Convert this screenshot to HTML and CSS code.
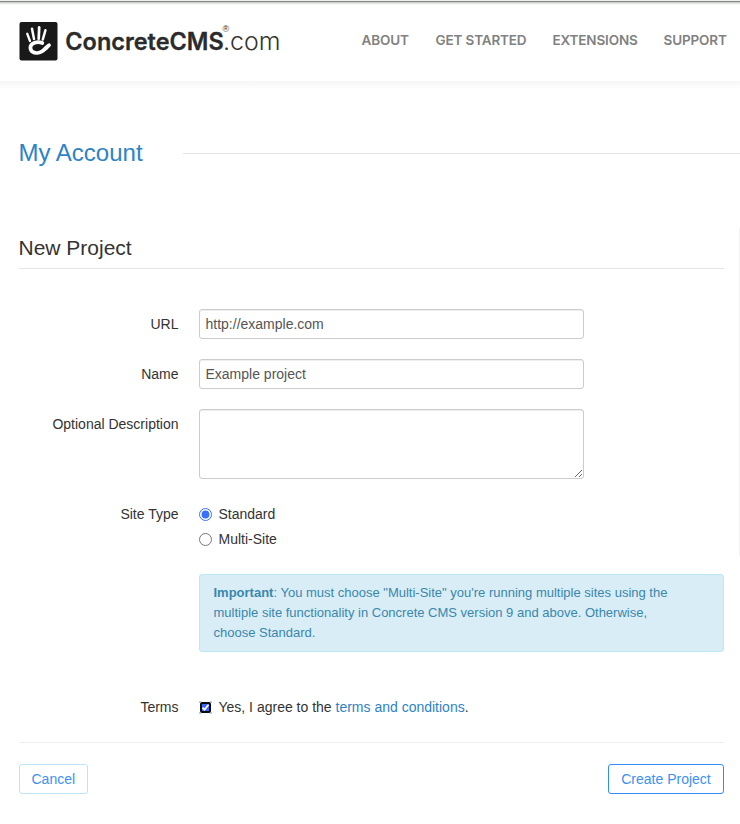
FILE: index.html
```
<!DOCTYPE html>
<html lang="en">
<head>
<meta charset="utf-8">
<title>My Account - New Project</title>
<link rel="stylesheet" href="styles.css">
</head>
<body>
<header class="header">
  <a class="brand" href="#">
    <svg width="265" height="42" viewBox="18 21 265 42" role="img" aria-label="ConcreteCMS.com">
      <rect x="19.5" y="22" width="38" height="38.5" rx="2" fill="#191919"/>
      <g fill="none" stroke="#fff" stroke-linecap="round">
        <path d="M27.2 33.7 L30 41" stroke-width="2.3"/>
        <path d="M32 28.7 L34 39" stroke-width="2.5"/>
        <path d="M39.2 27.4 L38.7 38.8" stroke-width="2.7"/>
        <path d="M45.4 30.3 L42.8 39.5" stroke-width="2.5"/>
        <path d="M42.3 43 C37.5 40.9 30.6 42.7 30.4 47.3 C30.4 51.6 33.6 53.2 37.4 53 C43.6 52.7 45 48 49 45.2" stroke-width="3.7"/>
      </g>
      <path d="M41 50.5 C44 48 46 43.7 50 43.7 C51.3 44.5 49 47.5 47.4 49.5 L42 53 Z" fill="#fff"/>
      <text class="logo-bold" x="65.3" y="50" textLength="158.5" lengthAdjust="spacingAndGlyphs">ConcreteCMS</text>
      <text class="logo-light" x="223" y="50" textLength="57.5" lengthAdjust="spacingAndGlyphs">.com</text>
      <text class="logo-mark" x="222.5" y="32">®</text>
    </svg>
  </a>
  <nav class="nav">
    <a class="about" href="#">ABOUT</a>
    <a class="started" href="#">GET STARTED</a>
    <a class="extensions" href="#">EXTENSIONS</a>
    <a class="support" href="#">SUPPORT</a>
  </nav>
</header>
<div class="page-title"><h1>My Account</h1><span class="rule"></span></div>
<div class="content">
  <main class="main">
    <h2>New Project</h2>
    <form class="form">
      <div class="row"><label for="url">URL</label><input class="control" id="url" type="text" value="http://example.com"></div>
      <div class="row"><label for="name">Name</label><input class="control" id="name" type="text" value="Example project"></div>
      <div class="row"><label for="desc">Optional Description</label><textarea class="control" id="desc"></textarea></div>
      <div class="row">
        <span class="label">Site Type</span>
        <div class="options">
          <label class="option"><input type="radio" name="type" checked>Standard</label>
          <label class="option"><input type="radio" name="type">Multi-Site</label>
          <p class="notice"><b>Important</b>: You must choose "Multi-Site" you're running multiple sites using the<br>multiple site functionality in Concrete CMS version 9 and above. Otherwise,<br>choose Standard.</p>
        </div>
      </div>
      <div class="row terms">
        <span class="label">Terms</span>
        <div class="option">
          <svg class="check" width="13" height="13" viewBox="0 0 13 13" aria-hidden="true">
            <path d="M.5 2V.5H2M11 .5h1.5V2M.5 11v1.5H2M11 12.5h1.5V11" fill="none" stroke="#a8c4ff"/>
            <rect x="2" y="2" width="9" height="9" rx="1" fill="#3b66f7" stroke="#080a12" stroke-width="2"/>
            <path d="M3.5 6.7l2 2 4-5" fill="none" stroke="#fff" stroke-width="1.8"/>
          </svg>
          <span>Yes, I agree to the <a href="#">terms and conditions</a>.</span>
        </div>
      </div>
      <div class="actions"><button class="cancel" type="button">Cancel</button><button class="create" type="button">Create Project</button></div>
    </form>
  </main>
  <aside class="sidebar"></aside>
</div>
</body>
</html>
```
FILE: styles.css
```
* { box-sizing: border-box; }
html { overflow: hidden; }
body { margin: 0; background: #fff; color: #333; font: 14px/20px "Liberation Sans", Arial, sans-serif; }
a { color: #2d83c5; text-decoration: none; }
.header {
  display: flex; justify-content: space-between; height: 81px; padding: 21px 12.5px 0 18px;
  background: linear-gradient(#eee 0 1px, #858885 1px 2px, #cdcfcc 2px 3px, #e5e7e4 3px 4px, #f7f8f7 4px 5px, #fff 5px);
}
.brand, .brand svg { display: block; }
.logo-bold { font: 600 24px Inter, sans-serif; fill: #2b2b2b; stroke: #2b2b2b; stroke-width: .3px; }
.logo-light { font: 300 24px Inter, sans-serif; fill: #333; }
.logo-mark { font: 9px "Liberation Sans", sans-serif; fill: #333; }
.nav { display: flex; gap: 26px; padding-top: 9px; }
.nav a { color: #818181; font: 600 13.5px/20px Inter, sans-serif; letter-spacing: -.15px; white-space: nowrap; }
.nav .about { width: 48px; }
.nav .started { width: 91px; }
.nav .extensions { width: 85px; }
.nav .support { width: 64px; }
.page-title {
  display: flex; align-items: center; gap: 40px; height: 146px; padding: 52px 0 54px 18.5px;
  background: linear-gradient(#f6f6f6, #fff 8px);
}
h1 { margin: 0; color: #2d83c5; font-size: 24px; line-height: 40px; font-weight: 400; }
.rule { flex: 1; height: 1px; margin-top: 1px; background: #e5e5e5; }
.content { display: flex; justify-content: space-between; }
.main { width: 705.5px; margin-left: 18.5px; }
.sidebar { width: 1px; height: 328px; margin-top: 1px; background: #f2f2f2; }
h2 { height: 42px; margin: 0 0 40px; border-bottom: 1px solid #e5e5e5; font-size: 21px; line-height: 42px; font-weight: 400; }
.form { display: flex; flex-direction: column; gap: 20px; }
.row { display: grid; grid-template-columns: 160px 1fr; column-gap: 20px; }
.row > label, .label { padding-top: 5px; text-align: right; }
.control {
  display: block; width: 385px; height: 30px; margin: 0; padding: 4px 6px; border: 1px solid #ccc; border-radius: 3px;
  background: #fff; box-shadow: inset 0 1px 1px rgba(0, 0, 0, .075); color: #555; font: inherit;
}
textarea.control { height: 70px; }
.options { padding-top: 5px; }
.option { display: flex; align-items: center; gap: 7px; height: 20px; margin-bottom: 5px; }
.option input { width: 13px; height: 13px; margin: 1px 0 0; accent-color: #3b71f7; }
.notice { height: 78px; margin: 25px 0 0; padding: 8px 14px; border: 1px solid #bce8f1; border-radius: 3px; background: #d9edf7; color: #3a87ad; font-size: 13px; }
.terms { margin-top: 20px; }
.terms .option { margin-top: 5px; }
.check { display: block; margin: 1px -.5px 0 .5px; }
.actions { display: flex; justify-content: space-between; padding-top: 21px; border-top: 1px solid #eee; }
button { height: 30px; padding: 0 12px; border: 1px solid #2f8df9; border-radius: 3px; background: #fff; color: #3b91f4; font: inherit; }
.create { padding: 0 12.3px; }
.cancel { border-color: #bfe3fb; }
```
